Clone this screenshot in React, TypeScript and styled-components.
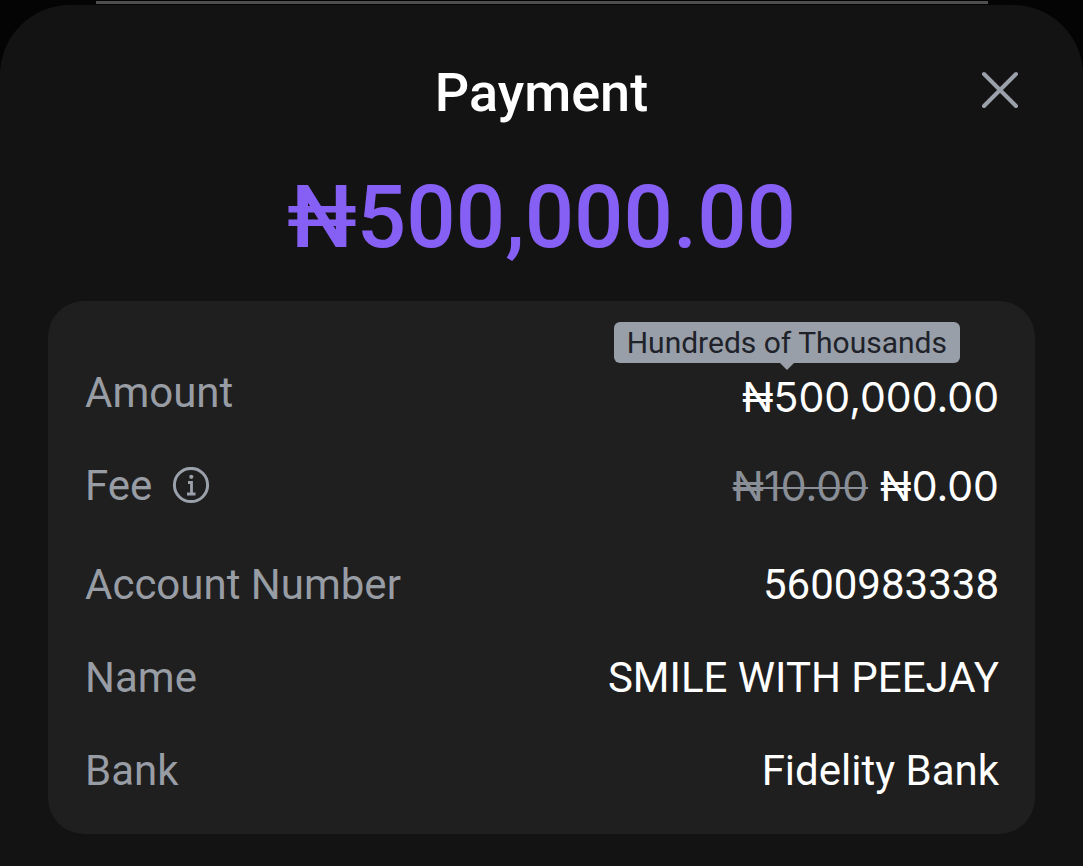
import React from "react";
import styled, { createGlobalStyle } from "styled-components";

const GlobalStyle = createGlobalStyle`
  * { box-sizing: border-box; }
  html, body { margin: 0; background: #040404; }
  body { font-family: Roboto, "Noto Sans", sans-serif; color: #fff; }
`;

const Page = styled.div`
  display: flex;
  flex-direction: column;
  min-height: 100vh;
  padding-top: 1px;
`;

const BackdropEdge = styled.div`
  height: 3px;
  margin: 0 95px 1px 96px;
  background: #4f4d4f;
`;

const Sheet = styled.main`
  flex: 1;
  padding: 50px 48px 32px;
  border-radius: 70px 70px 0 0;
  background: #131313;
`;

const Header = styled.header`
  display: grid;
  grid-template-columns: 70px 1fr 70px;
  align-items: start;
  height: 76px;
`;

const Title = styled.h1`
  grid-column: 2;
  margin: 0;
  font-size: 54px;
  line-height: 76px;
  font-weight: 500;
  text-align: center;
`;

const IconButton = styled.button`
  display: flex;
  align-items: center;
  justify-content: center;
  padding: 0;
  border: 0;
  background: none;
  color: #9ba1aa;
  cursor: pointer;
`;

const CloseButton = styled(IconButton)`
  height: 70px;
`;

const Total = styled.p`
  margin: 34px 0 32px;
  font-size: 87px;
  line-height: 104px;
  font-weight: 500;
  text-align: center;
  color: #865ff4;
`;

const Card = styled.dl`
  display: flex;
  flex-direction: column;
  gap: 43px;
  margin: 0;
  padding: 67px 36px 38px 37px;
  border-radius: 36px;
  background: #1f1f1f;
`;

const Row = styled.div<{ $spaced?: boolean }>`
  display: flex;
  justify-content: space-between;
  align-items: flex-start;
  padding-bottom: ${(p) => (p.$spaced ? 6 : 0)}px;
  font-size: 42px;
  line-height: 50px;
`;

const Label = styled.dt`
  display: flex;
  align-items: center;
  gap: 20px;
  color: #989da5;
`;

const Value = styled.dd`
  margin: 0;
`;

const Money = styled(Value)<{ $lowered?: boolean }>`
  position: relative;
  display: flex;
  gap: 12px;
  margin-bottom: ${(p) => (p.$lowered ? -4 : 0)}px;
  padding-top: ${(p) => (p.$lowered ? 4 : 0)}px;
  font-family: Inter, Roboto, sans-serif;
  font-size: 41px;
`;

const OldFee = styled.s`
  color: #898e97;
  text-decoration-thickness: 2px;
`;

const Tip = styled.span`
  position: absolute;
  right: 39px;
  bottom: 59px;
  padding: 0 13px;
  border-radius: 6px;
  background: #989fa8;
  color: #20222a;
  font-family: Roboto, sans-serif;
  font-size: 30px;
  line-height: 41px;
  white-space: nowrap;

  &::after {
    content: "";
    position: absolute;
    top: 100%;
    left: 50%;
    margin-left: -7px;
    border: 7px solid transparent;
    border-bottom-width: 0;
    border-top-color: #989fa8;
  }
`;

const CloseIcon = () => (
  <svg width="40" height="40" viewBox="0 0 40 40" fill="none" stroke="currentColor" strokeWidth="4" strokeLinecap="round" aria-hidden="true">
    <path d="M4 4 36 36M36 4 4 36" />
  </svg>
);

const InfoIcon = () => (
  <svg width="38" height="38" viewBox="0 1 38 38" fill="none" stroke="currentColor" strokeWidth="3" aria-hidden="true">
    <circle cx="19" cy="19" r="16.6" />
    <path d="M16 16.5h3.5V28M15 28h8.5" strokeWidth="2.8" />
    <circle cx="19.3" cy="10.8" r="2.1" fill="currentColor" stroke="none" />
  </svg>
);

export default function App() {
  return (
    <>
      <GlobalStyle />
      <Page>
        <BackdropEdge />
        <Sheet>
          <Header>
            <Title>Payment</Title>
            <CloseButton type="button" aria-label="Close">
              <CloseIcon />
            </CloseButton>
          </Header>
          <Total>₦500,000.00</Total>
          <Card>
            <Row>
              <Label>Amount</Label>
              <Money $lowered>
                <Tip role="tooltip">Hundreds of Thousands</Tip>
                ₦500,000.00
              </Money>
            </Row>
            <Row $spaced>
              <Label>
                Fee
                <IconButton type="button" aria-label="About the fee">
                  <InfoIcon />
                </IconButton>
              </Label>
              <Money>
                <OldFee>₦10.00</OldFee>
                <span>₦0.00</span>
              </Money>
            </Row>
            <Row>
              <Label>Account Number</Label>
              <Value>5600983338</Value>
            </Row>
            <Row>
              <Label>Name</Label>
              <Value>SMILE WITH PEEJAY</Value>
            </Row>
            <Row>
              <Label>Bank</Label>
              <Value>Fidelity Bank</Value>
            </Row>
          </Card>
        </Sheet>
      </Page>
    </>
  );
}
